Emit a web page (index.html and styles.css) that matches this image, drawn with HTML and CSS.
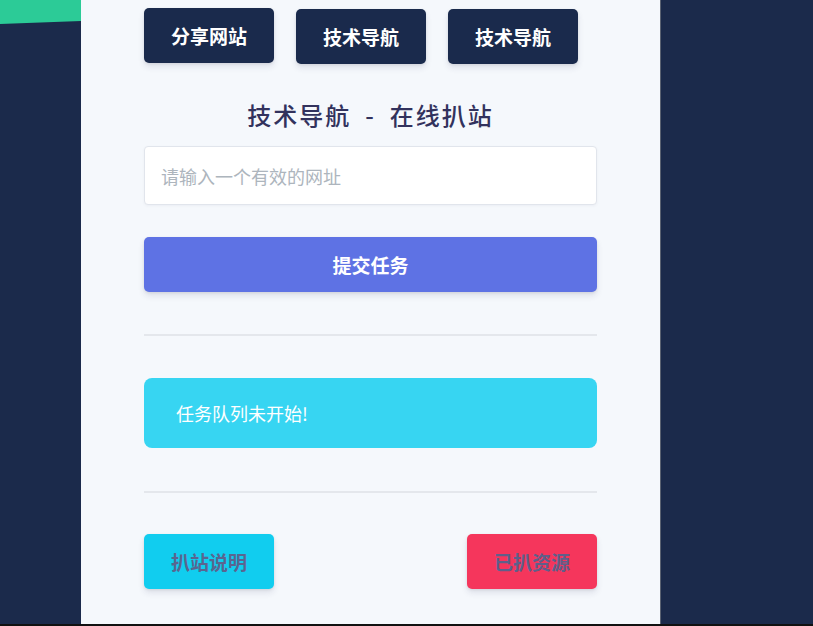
FILE: index.html
```html
<!DOCTYPE html>
<html lang="zh-CN">
<head>
    <meta charset="UTF-8">
    <meta name="viewport" content="width=device-width, initial-scale=1.0">
    <title>技术导航 - 在线扒站</title>
    <link rel="stylesheet" href="styles.css">
</head>
<body>
    <!-- зелёный уголок -->
    <svg class="corner" width="81" height="26" viewBox="0 0 81 26">
        <polygon points="0,0 81,0 81,21 0,24" fill="#2ccb97"/>
    </svg>

    <div class="page">
        <main class="panel">
            <nav class="nav">
                <button class="btn btn-dark raised">分享网站</button>
                <button class="btn btn-dark">技术导航</button>
                <button class="btn btn-dark">技术导航</button>
            </nav>

            <h2 class="title">技术导航&ensp;-&ensp;在线扒站</h2>

            <input class="url" type="text" placeholder="请输入一个有效的网址">

            <button class="btn btn-primary">提交任务</button>

            <hr class="line">

            <div class="alert">任务队列未开始!</div>

            <hr class="line line-low">

            <div class="footer-btns">
                <button class="btn btn-info">扒站说明</button>
                <button class="btn btn-danger">已扒资源</button>
            </div>
        </main>
    </div>
    <div class="edge"></div>
</body>
</html>
```

FILE: styles.css
```css
html, body {
    margin: 0;
    height: 100%;
}
body {
    background-color: #1b2a4b;
    font-family: "Noto Sans CJK SC", "Noto Sans", sans-serif;
    display: flex;
    flex-direction: column;
    overflow: hidden;
}
.corner {
    position: absolute;
    top: 0;
    left: 0;
}
.page {
    flex: 1;
    display: flex;
}
.panel {
    margin-left: 81px;
    width: 453px;
    padding: 9px 63px 0;
    background-color: #f5f8fc;
    border-right: 1px solid #5a6272;
    display: flex;
    flex-direction: column;
}
.edge {
    height: 2px;
    background-color: #111;
}
.nav {
    display: flex;
    gap: 22px;
}
.btn {
    font-family: "Noto Sans CJK SC", sans-serif;
    font-size: 19px;
    font-weight: 700;
    height: 55px;
    border: none;
    border-radius: 5px;
    cursor: pointer;
    box-shadow: 0 4px 6px rgba(50, 50, 93, .11), 0 1px 3px rgba(0, 0, 0, .08);
    padding: 0;
}
.btn-dark {
    width: 130px;
    background-color: #1a2a4c;
    color: #fff;
}
.raised {
    transform: translateY(-1px);
}
.title {
    margin: 33px 0 13px;
    text-align: center;
    font-size: 24px;
    line-height: 36px;
    font-weight: 500;
    letter-spacing: 2px;
    color: #32325d;
}
.url {
    height: 59px;
    box-sizing: border-box;
    padding: 0 16px;
    border: 1px solid #e1e5ec;
    border-radius: 4px;
    background: #fff;
    font-family: "Noto Sans CJK SC", sans-serif;
    font-size: 18px;
    box-shadow: 0 1px 3px rgba(50, 50, 93, .05);
}
.url::placeholder {
    color: #adb5bd;
}
.btn-primary {
    margin-top: 32px;
    width: 100%;
    background-color: #5e72e4;
    color: #fff;
}
.line {
    margin: 42px 0 0;
    border: none;
    border-top: 2px solid #e4e7ec;
}
.line-low {
    margin-top: 43px;
}
.alert {
    margin-top: 42px;
    height: 70px;
    box-sizing: border-box;
    padding: 0 32px;
    display: flex;
    align-items: center;
    background-color: #37d5f2;
    border-radius: 8px;
    color: #fff;
    font-size: 18px;
}
.footer-btns {
    margin-top: 41px;
    display: flex;
    justify-content: space-between;
}
.btn-info {
    width: 130px;
    background-color: #11cdef;
    color: #5a6590;
}
.btn-danger {
    width: 130px;
    background-color: #f5365c;
    color: #5e5f8a;
}
```
